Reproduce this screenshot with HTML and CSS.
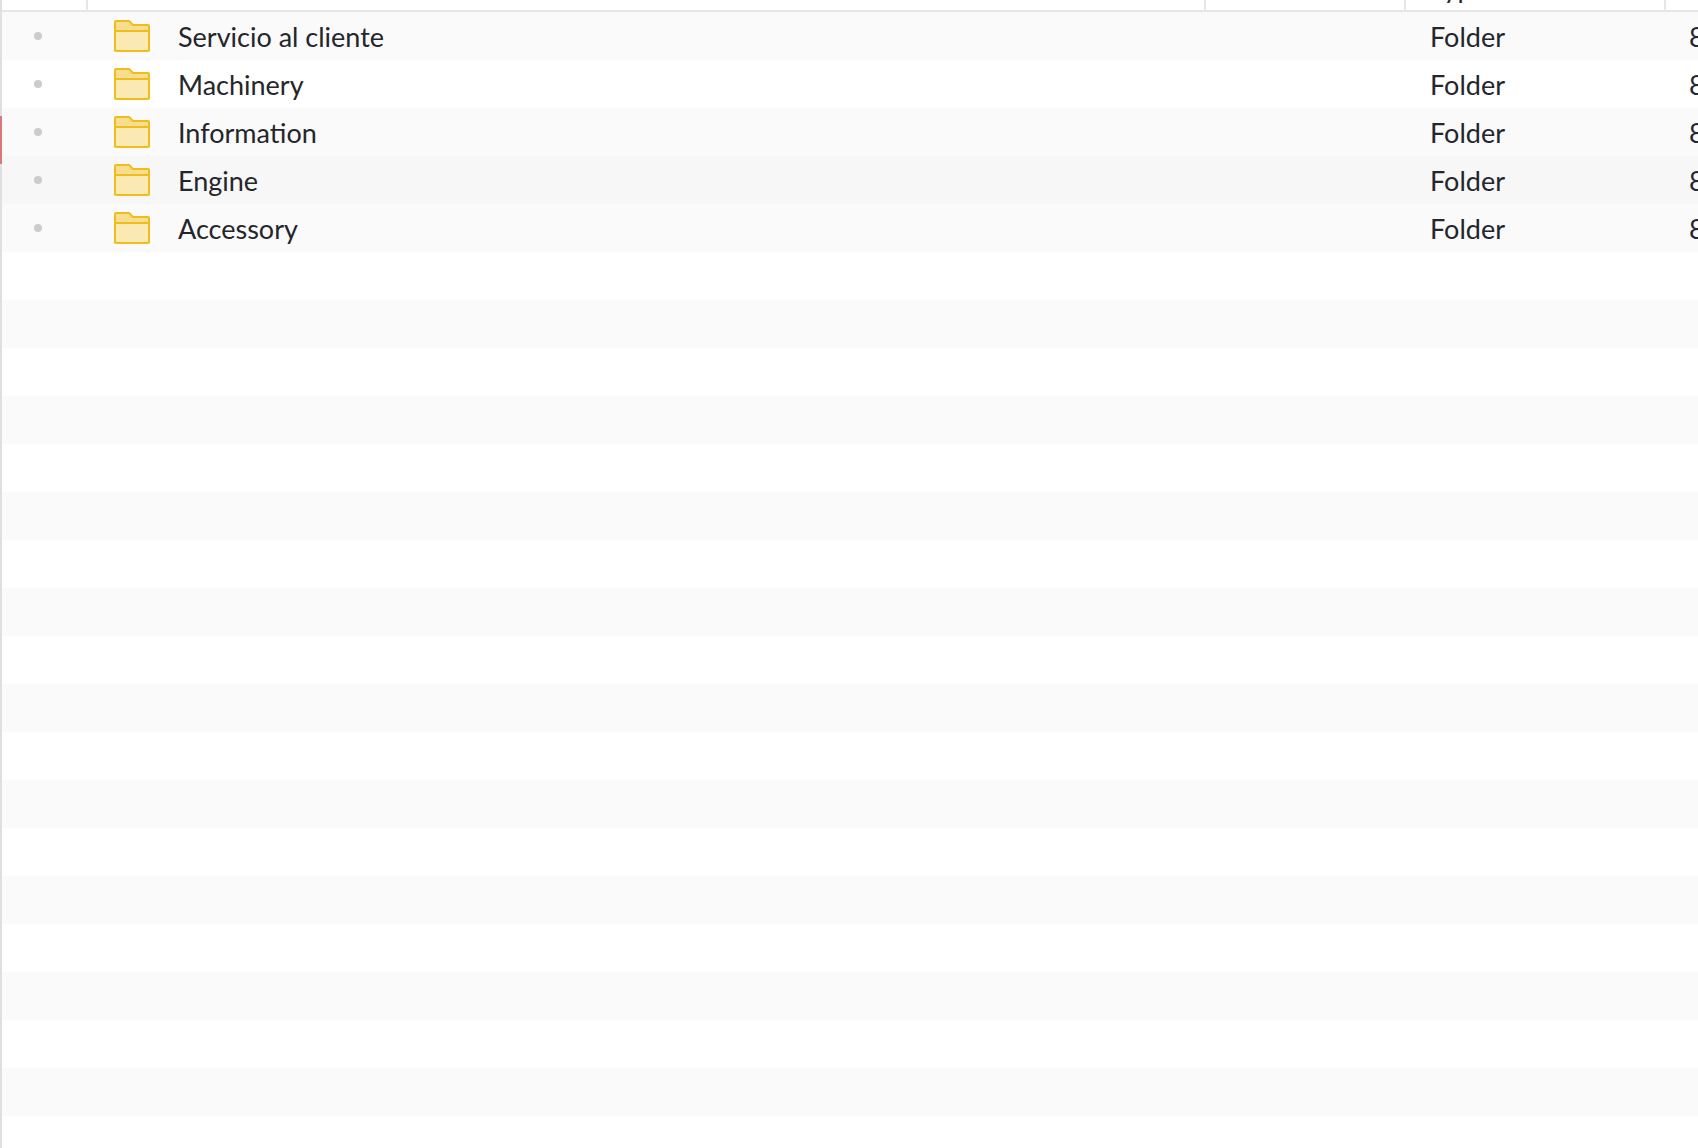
FILE: index.html
```html
<!DOCTYPE html>
<html lang="en">
<head>
    <meta charset="UTF-8">
    <meta name="viewport" content="width=device-width, initial-scale=1.0">
    <title>Folders</title>
    <link rel="stylesheet" href="styles.css">
</head>
<body>
    <svg class="svg-defs" width="0" height="0">
        <symbol id="folder" viewBox="0 0 36 32">
            <path d="M1 11V3a2 2 0 0 1 2-2h12l4 4h15a1 1 0 0 1 1 1v5z" fill="#f8dd8f"/>
            <path d="M1 11h34v19a1 1 0 0 1-1 1H2a1 1 0 0 1-1-1z" fill="#fbe9b4"/>
            <path d="M1 11h34M2 31h32a1 1 0 0 0 1-1V6a1 1 0 0 0-1-1H19l-4-4H2a1 1 0 0 0-1 1v28a1 1 0 0 0 1 1z" fill="none" stroke="#efbd1c" stroke-width="2"/>
        </symbol>
    </svg>

    <div class="table">
        <div class="table-head">
            <div class="head-cell"></div>
            <div class="head-cell"></div>
            <div class="head-cell"></div>
            <div class="head-cell head-type"><span>Type</span></div>
            <div class="head-cell head-last"></div>
        </div>

        <div class="row">
            <div class="cell-dot"><span class="dot"></span></div>
            <div class="cell-icon"><svg class="folder-icon"><use href="#folder"/></svg></div>
            <div class="cell-text">Servicio al cliente</div>
            <div class="cell-text">Folder</div>
            <div class="cell-text">8</div>
        </div>
        <div class="row">
            <div class="cell-dot"><span class="dot"></span></div>
            <div class="cell-icon"><svg class="folder-icon"><use href="#folder"/></svg></div>
            <div class="cell-text">Machinery</div>
            <div class="cell-text">Folder</div>
            <div class="cell-text">8</div>
        </div>
        <div class="row">
            <div class="cell-dot"><span class="dot"></span></div>
            <div class="cell-icon"><svg class="folder-icon"><use href="#folder"/></svg></div>
            <div class="cell-text">Information</div>
            <div class="cell-text">Folder</div>
            <div class="cell-text">8</div>
            <span class="row-mark"></span>
        </div>
        <div class="row row-hover">
            <div class="cell-dot"><span class="dot"></span></div>
            <div class="cell-icon"><svg class="folder-icon"><use href="#folder"/></svg></div>
            <div class="cell-text">Engine</div>
            <div class="cell-text">Folder</div>
            <div class="cell-text">8</div>
        </div>
        <div class="row">
            <div class="cell-dot"><span class="dot"></span></div>
            <div class="cell-icon"><svg class="folder-icon"><use href="#folder"/></svg></div>
            <div class="cell-text">Accessory</div>
            <div class="cell-text">Folder</div>
            <div class="cell-text">8</div>
        </div>

        <!-- filas vacias -->
        <div class="row"></div><div class="row"></div><div class="row"></div>
        <div class="row"></div><div class="row"></div><div class="row"></div>
        <div class="row"></div><div class="row"></div><div class="row"></div>
        <div class="row"></div><div class="row"></div><div class="row"></div>
        <div class="row"></div><div class="row"></div><div class="row"></div>
        <div class="row"></div><div class="row"></div><div class="row"></div>
        <div class="row"></div>
    </div>
</body>
</html>
```

FILE: styles.css
```css
html, body {
    margin: 0;
    height: 100%;
    overflow: hidden;
    background: #fff;
}

body {
    font-family: "Lato", "Noto Sans", sans-serif;
    font-size: 27px;
    color: #24262b;
}

.svg-defs {
    display: block;
    height: 0;
}

.table {
    width: 1760px;
    height: 1148px;
    padding-left: 2px;
    box-shadow: inset 2px 0 0 #e0e0e0;
    overflow: hidden;
}

.table-head {
    display: grid;
    grid-template-columns: 86px 1118px 200px 260px 1fr;
    height: 10px;
    border-bottom: 2px solid #e6e6e6;
}

.head-cell {
    border-right: 2px solid #e6e6e6;
    overflow: hidden;
}

.head-last {
    border-right: none;
}

.head-type span {
    display: block;
    margin-top: -28px;
    padding-left: 24px;
    line-height: 32px;
}

.row {
    display: grid;
    grid-template-columns: 112px 64px 1252px 259px 1fr;
    grid-template-rows: 48px;
    position: relative;
    height: 48px;
    align-items: center;
}

.row:nth-child(even) {
    background: #fafafa;
}

.row.row-hover {
    background: #f7f7f7;
}

.row-mark {
    position: absolute;
    left: -2px;
    top: 8px;
    width: 2px;
    height: 48px;
    background: #d9777b;
    z-index: 1;
}

.cell-dot {
    display: flex;
    padding-left: 32px;
}

.dot {
    width: 8px;
    height: 8px;
    border-radius: 50%;
    background: #ccc;
}

.cell-icon {
    display: flex;
}

.folder-icon {
    display: block;
    width: 36px;
    height: 32px;
}

.cell-text {
    box-sizing: border-box;
    height: 48px;
    padding-top: 1px;
    white-space: nowrap;
    line-height: 48px;
}
```
